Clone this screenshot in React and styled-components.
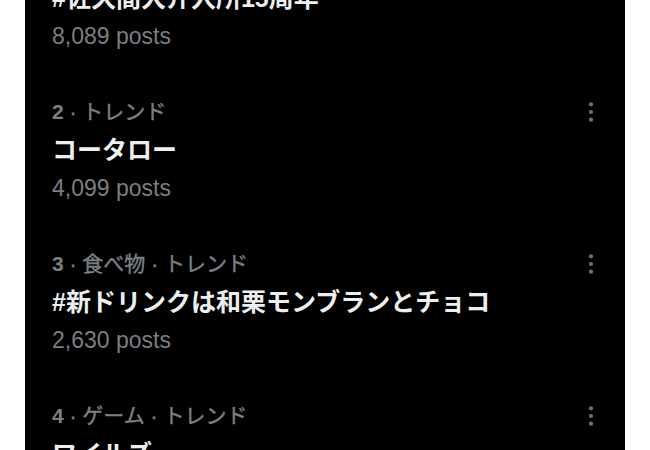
import styled, { createGlobalStyle } from "styled-components";

const trends = [
  { rank: 1, category: "トレンド", title: "#佐久間大介入所15周年", posts: "8,089" },
  { rank: 2, category: "トレンド", title: "コータロー", posts: "4,099" },
  { rank: 3, category: "食べ物 · トレンド", title: "#新ドリンクは和栗モンブランとチョコ", posts: "2,630" },
  { rank: 4, category: "ゲーム · トレンド", title: "ワイルズ", posts: "1,912" },
];

const MoreIcon = () => (
  <svg width="20" height="24" viewBox="0 0 20 24" fill="currentColor">
    <circle cx="10" cy="4.3" r="2.1" />
    <circle cx="10" cy="12" r="2.1" />
    <circle cx="10" cy="19.7" r="2.1" />
  </svg>
);

const App = () => {
  return (
    <>
      <GlobalStyle />
      <Page>
        <Panel>
          {trends.map((t) => (
            <TrendItem key={t.rank}>
              <TrendText>
                <Category>
                  <Rank>{t.rank}</Rank>
                  {` · ${t.category}`}
                </Category>
                <Title>{t.title}</Title>
                <Posts>{t.posts} posts</Posts>
              </TrendText>
              <MoreButton aria-label="more">
                <MoreIcon />
              </MoreButton>
            </TrendItem>
          ))}
        </Panel>
      </Page>
    </>
  );
};

export default App;

const GlobalStyle = createGlobalStyle`
  html, body {
    margin: 0;
    padding: 0;
    background: #ffffff;
    overflow: hidden;
  }
  body {
    font-family: "Liberation Sans", "Noto Sans CJK JP", sans-serif;
  }
`;

const Page = styled.div`
  width: 650px;
  height: 450px;
  overflow: hidden;
  display: flex;
  justify-content: center;
  background: #ffffff;
`;

const Panel = styled.div`
  width: 600px;
  height: 450px;
  background: #000000;
  display: flex;
  flex-direction: column;
  overflow: hidden;
`;

const TrendItem = styled.div`
  display: flex;
  align-items: flex-start;
  justify-content: space-between;
  padding: 19px 24px 19px 27px;
  flex-shrink: 0;

  &:first-child {
    margin-top: -78px;
  }
`;

const TrendText = styled.div`
  display: flex;
  flex-direction: column;
`;

const Category = styled.span`
  font-size: 21px;
  line-height: 38px;
  height: 38px;
  font-weight: 400;
  color: #7b7f84;
  -webkit-text-stroke: 0.4px #7b7f84;
  white-space: nowrap;
`;

const Rank = styled.span`
  font-weight: 700;
  -webkit-text-stroke: 0;
`;

const Title = styled.span`
  font-size: 25px;
  line-height: 38px;
  height: 38px;
  font-weight: 700;
  color: #eceeef;
  white-space: nowrap;
`;

const Posts = styled.span`
  font-size: 23px;
  line-height: 38px;
  height: 38px;
  color: #7a7e83;
  white-space: nowrap;
`;

const MoreButton = styled.div`
  display: flex;
  align-items: center;
  justify-content: center;
  width: 20px;
  height: 38px;
  color: #6c6f73;
`;
